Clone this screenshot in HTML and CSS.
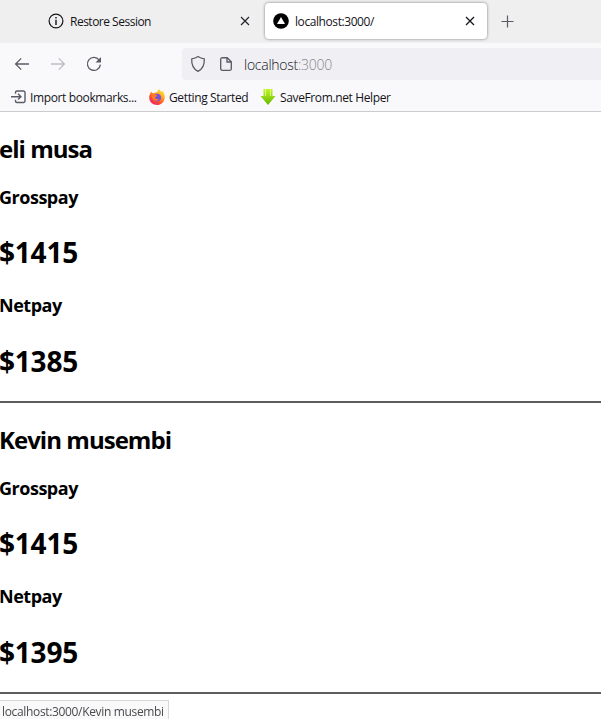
FILE: index.html
```html
<!DOCTYPE html>
<html lang="en">
<head>
<meta charset="utf-8">
<title>localhost:3000/</title>
<link rel="stylesheet" href="styles.css">
</head>
<body>
<header class="browser">
  <div class="tabs">
    <div class="tab">
      <svg class="icon" width="16" height="16" viewBox="0 0 16 16"><circle cx="8" cy="8" r="6.9" fill="none" stroke="#15141a" stroke-width="1.2"/><path d="M8 6.8V12M8 4v1.4" stroke="#15141a" stroke-width="1.4"/></svg>
      <span class="tab-title restore">Restore Session</span>
      <svg class="close" width="10" height="10" viewBox="0 0 10 10"><path d="M1 1l8 8M9 1L1 9" stroke="#25242b" stroke-width="1.15"/></svg>
    </div>
    <div class="tab active">
      <svg class="icon" width="16" height="16" viewBox="0 0 16 16"><circle cx="8" cy="8" r="7.8"/><path d="M8 4l4 7H4z" fill="#fff"/></svg>
      <span class="tab-title local">localhost:3000/</span>
      <svg class="close" width="10" height="10" viewBox="0 0 10 10"><path d="M1 1l8 8M9 1L1 9" stroke="#15141a" stroke-width="1.25"/></svg>
    </div>
    <svg class="new-tab" width="13" height="13" viewBox="0 0 13 13"><path d="M6.5 .5v12M.5 6.5h12" stroke="#5b5b66" stroke-width="1.2"/></svg>
  </div>
  <nav class="toolbar">
    <svg class="nav-icon" width="16" height="16" viewBox="0 0 16 16"><path d="M15 8H1.8M7.2 2.4L1.6 8l5.6 5.6" fill="none" stroke="#5b5b66" stroke-width="1.3"/></svg>
    <svg class="nav-icon" width="16" height="16" viewBox="0 0 16 16"><path d="M1 8h13.2M8.8 2.4L14.4 8l-5.6 5.6" fill="none" stroke="#bdbdc3" stroke-width="1.3"/></svg>
    <svg class="nav-icon" width="16" height="16" viewBox="0 0 16 16"><path d="M13.2 4.1A6.5 6.5 0 1 0 14.4 8.6" fill="none" stroke="#5b5b66" stroke-width="1.3"/><path d="M15 1v5.5H9.5z" fill="#5b5b66"/></svg>
    <div class="url-bar">
      <svg width="16" height="18" viewBox="0 0 16 18"><path d="M8 1.6c2 1.5 4 2 6.3 2.2.3 5.700-1.500 10.200-6.300 12.600C3.200 14 1.400 9.500 1.700 3.800 4 3.600 6 3.100 8 1.600z" fill="none" stroke="#5b5b66" stroke-width="1.3" stroke-linejoin="round"/></svg>
      <svg class="page-icon" width="12" height="14" viewBox="0 0 12 14"><path d="M2.200.7h5L11.300 4.800v7a1.500 1.500 0 0 1-1.500 1.500H2.200A1.500 1.500 0 0 1 .7 11.800V2.200A1.500 1.500 0 0 1 2.200.7zM7 .8V5h4.200" fill="none" stroke="#5b5b66" stroke-width="1.35"/></svg>
      <span class="url">localhost<span class="port">:3000</span></span>
    </div>
  </nav>
  <div class="bookmarks">
    <a class="bookmark import"><svg width="16" height="16" viewBox="0 0 16 16"><path d="M4.500 4.800V3.500a1.500 1.500 0 0 1 1.500-1.500h6.500A1.500 1.500 0 0 1 14 3.500v8.500a1.500 1.500 0 0 1-1.500 1.500H6A1.500 1.500 0 0 1 4.500 12v-1.300M0 7.700h9.500M7 4.800l3 2.900-3 2.900" fill="none" stroke="#5b5b66" stroke-width="1.4"/></svg><span>Import bookmarks...</span></a>
    <a class="bookmark started"><svg width="16" height="16" viewBox="0 0 16 16"><defs><linearGradient id="flame" x1=".85" y1="0" x2=".2" y2="1"><stop offset="0" stop-color="#fff13a"/><stop offset=".35" stop-color="#ffad20"/><stop offset=".7" stop-color="#ff4b30"/><stop offset="1" stop-color="#ec1877"/></linearGradient></defs><path d="M10 0c.8 1.300 2 2.300 3 3 .1-.5 0-1-.1-1.400C15 3.500 16 6 15.800 8.700 15.500 13 12 16 8 16S.3 13 .2 8.800C.1 6.400 1 4 2.500 2.400l.5 1.500L5.300 4C6 3.500 7 3.200 8 3.300 8.500 2 9.200 1 10 0z" fill="url(#flame)"/><circle cx="8.200" cy="8.600" r="3.800" fill="#7650df"/><path d="M2.500 5.500l3-.8 2.700 1.700c-.5 1.300-2 1.200-2.300 2 .9 1.900 2.600 1.800 4.100 1-.8 2.400-3.500 3.100-5.400 1.800-1.300-1-1.700-3-2.100-5.700z" fill="#ff7b25"/></svg><span>Getting Started</span></a>
    <a class="bookmark savefrom"><svg width="16" height="16" viewBox="0 0 16 16"><defs><linearGradient id="leaf" x2="0" y2="1"><stop stop-color="#c3f52c"/><stop offset="1" stop-color="#64b800"/></linearGradient></defs><path d="M3.500 0h9v7H15.500L8 16 .5 7h3z" fill="url(#leaf)"/><path d="M5.500 0V7M10.500 0V7" stroke="#e4ff91" stroke-width=".8"/></svg><span>SaveFrom.net Helper</span></a>
  </div>
</header>
<main>
  <section class="employee">
    <h2>eli musa</h2>
    <h3>Grosspay</h3><h1>$1415</h1>
    <h3>Netpay</h3><h1>$1385</h1>
  </section>
  <section class="employee">
    <h2>Kevin musembi</h2>
    <h3>Grosspay</h3><h1>$1415</h1>
    <h3>Netpay</h3><h1>$1395</h1>
  </section>
</main>
<div class="status">localhost:3000/Kevin musembi</div>
</body>
</html>
```
FILE: styles.css
```css
* { box-sizing: border-box; }
body { margin: 0; height: 719px; overflow: hidden; background: #fff; color: #000; font-family: "Open Sans", "Noto Sans", sans-serif; }
svg { display: block; flex: none; }
span { white-space: nowrap; }
.browser { height: 112px; background: #f9f9fb; border-bottom: 1px solid #cccccf; color: #15141a; font-size: 12px; }
.tabs { height: 43px; background: #efefef; display: flex; padding-top: 3px; }
.tab { width: 224px; height: 36px; margin-left: 40px; padding: 0 14px 0 8px; display: flex; align-items: center; }
.tab.active { width: 222px; margin-left: 1px; padding: 0 12px 0 8px; background: #fff; border-radius: 4px; box-shadow: 0 0 3px rgba(0, 0, 0, .5); }
.tab-title { margin-left: 6px; line-height: 20px; position: relative; top: 1px; }
.close { margin-left: auto; }
.new-tab { margin: 12px 0 0 14px; }
.toolbar { height: 42px; display: flex; align-items: center; padding: 0 0 2px 14px; }
.nav-icon { margin-right: 20px; position: relative; top: 1px; }
.url-bar { height: 32px; margin-left: 60px; margin-top: 2px; flex: 1; display: flex; align-items: center; background: #f0f0f4; border-radius: 4px 0 0 4px; padding-left: 8px; }
.page-icon { margin-left: 14px; }
.url { margin-left: 12px; font-size: 14px; font-weight: 350; letter-spacing: -.26px; }
.port { color: #85858e; }
.bookmarks { height: 26px; display: flex; align-items: center; padding-left: 11px; margin-top: -1px; }
.bookmark { display: flex; align-items: center; gap: 4px; height: 24px; letter-spacing: -.37px; }
.import { width: 138px; gap: 3px; }
.started { width: 111px; }
.restore { letter-spacing: -.5px; }
.local { letter-spacing: -.42px; }
.employee { height: 291px; border-bottom: 2px solid #5d5d5d; padding-top: 21px; }
h1, h2, h3 { margin: 0; font-weight: 700; white-space: nowrap; }
h2 { font-size: 24px; line-height: 32px; margin-left: -1px; letter-spacing: -.97px; }
h3 { font-size: 18px; line-height: 24px; margin-left: -1px; letter-spacing: -.48px; }
h1 { font-size: 28px; line-height: 38px; margin-left: -1px; letter-spacing: -.2px; }
h2 + h3 { margin-top: 20px; }
h3 + h1 { margin-top: 24px; }
h1 + h3 { margin-top: 22px; }
h1 + h3 + h1 { margin-top: 25px; }
.status { position: fixed; left: 0; bottom: 0; width: 169px; height: 19px; padding: 2px 0 0 2px; background: #f9f9fa; border: 1px solid #d8d8da; border-width: 1px 1px 0 0; color: #4a4a4f; font-size: 12px; line-height: 18px; letter-spacing: -.34px; white-space: nowrap; }
```
